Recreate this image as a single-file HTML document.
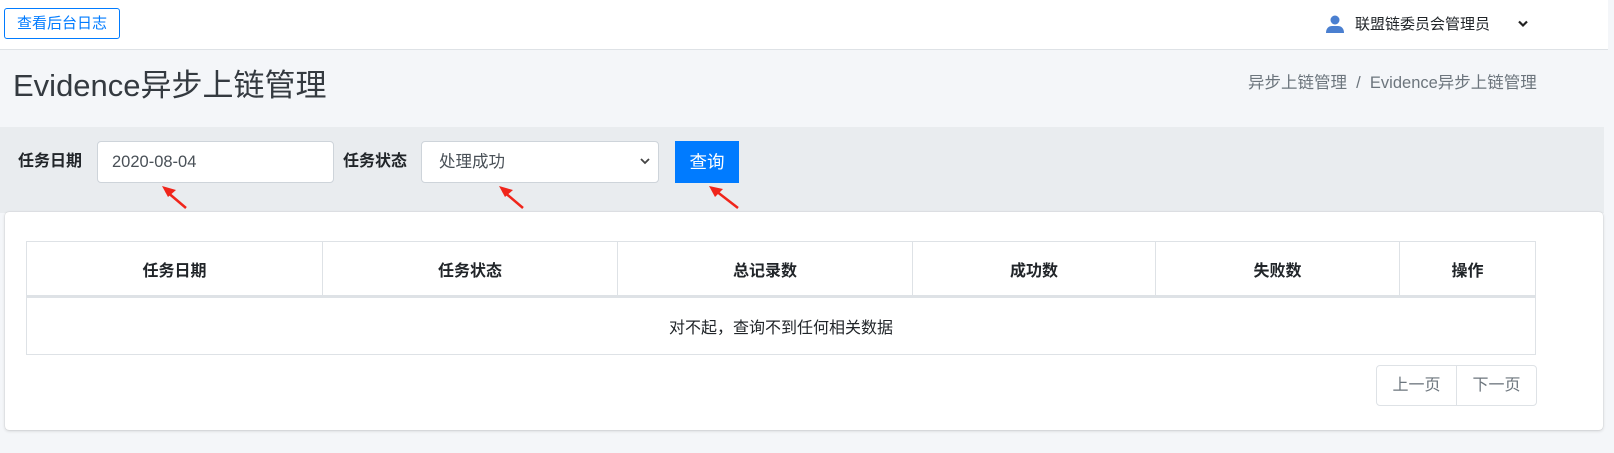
<!DOCTYPE html>
<html><head><meta charset="utf-8"><style>
*{box-sizing:border-box;margin:0;padding:0}
body{width:1614px;height:453px;background:#f4f6f9;font-family:"Liberation Sans","Noto Sans CJK SC",sans-serif;color:#212529;position:relative;overflow:hidden;font-size:16px}
.abs{position:absolute}
.nav{left:0;top:0;width:1608px;height:50px;background:#fff;border-bottom:1px solid #dee2e6}
.btnlog{left:4px;top:8px;width:116px;height:31px;border:1px solid #007bff;border-radius:3px;color:#007bff;font-size:15px;line-height:29px;text-align:center}
.user{left:1326px;top:14px;font-size:15px;color:#212529;line-height:22px}
.filter{left:0;top:127px;width:1604px;height:86px;background:#e9ecef}
.lbl{font-weight:bold;font-size:16px;line-height:22px}
.inp{background:#fff;border:1px solid #ced4da;border-radius:4px;height:42px;font-size:16.5px;color:#495057;line-height:40px;padding-left:14px}
.card{left:5px;top:212px;width:1598px;height:218px;background:#fff;border-radius:4px;box-shadow:0 0 1px rgba(0,0,0,.2),0 1px 3px rgba(0,0,0,.15)}
table{position:absolute;left:26px;top:241px;width:1510px;border-collapse:collapse}
th,td{border:1px solid #dee2e6;text-align:center}
th{height:55px;font-weight:bold;font-size:16px;border-bottom:3px solid #dee2e6}
td{height:58px;font-size:16px}
.pg{left:1376px;top:365px;width:161px;height:41px;border:1px solid #dee2e6;border-radius:4px;display:flex;color:#6c757d;font-size:16px;line-height:39px}
.pg span{flex:1;text-align:center}
</style></head><body>
<div class="abs nav"></div>
<div class="abs btnlog">查看后台日志</div>
<svg class="abs" style="left:1326px;top:15px" width="18" height="18" viewBox="0 0 18 18"><circle cx="9" cy="5" r="4.5" fill="#4a7fd0"/><path d="M0 18c0-5 3-7 6-7h6c3 0 6 2 6 7z" fill="#4a7fd0"/></svg>
<div class="abs user" style="left:1355px">联盟链委员会管理员</div>
<svg class="abs" style="left:1517px;top:20px" width="12" height="8" viewBox="0 0 12 8"><path d="M2 1.5l4 4 4-4" stroke="#222" stroke-width="2.2" fill="none"/></svg>
<div class="abs" style="left:13px;top:64px;font-size:31px;color:#343a40;line-height:44px">Evidence异步上链管理</div>
<div class="abs" style="left:1248px;top:71px;font-size:16.5px;color:#6c757d;line-height:24px">异步上链管理 &nbsp;/&nbsp; Evidence异步上链管理</div>
<div class="abs filter"></div>
<div class="abs lbl" style="left:18px;top:151px">任务日期</div>
<div class="abs inp" style="left:97px;top:141px;width:237px">2020-08-04</div>
<div class="abs lbl" style="left:343px;top:151px">任务状态</div>
<div class="abs inp" style="left:421px;top:141px;width:238px;padding-left:17px">处理成功</div>
<svg class="abs" style="left:640px;top:158px" width="10" height="7" viewBox="0 0 10 7"><path d="M1 1l4 4 4-4" stroke="#444" stroke-width="1.8" fill="none"/></svg>
<div class="abs" style="left:675px;top:141px;width:64px;height:42px;background:#007bff;color:#fff;font-size:17.5px;line-height:42px;text-align:center">查询</div>
<svg class="abs" style="left:0;top:180px" width="800" height="35" viewBox="0 180 800 35">
<g stroke="#f0251b" stroke-width="2.5" fill="#f0251b">
<line x1="186" y1="208" x2="166" y2="191"/><polygon points="162,186 176,190 168,197" stroke="none"/>
<line x1="523" y1="208" x2="503" y2="191"/><polygon points="499,186 513,190 505,197" stroke="none"/>
<line x1="738" y1="208" x2="716" y2="191"/><polygon points="709,186 723,189 715,197" stroke="none"/>
</g></svg>
<div class="abs card"></div>
<table>
<tr><th style="width:296px">任务日期</th><th style="width:295px">任务状态</th><th style="width:295px">总记录数</th><th style="width:243px">成功数</th><th style="width:244px">失败数</th><th>操作</th></tr>
<tr><td colspan="6">对不起，查询不到任何相关数据</td></tr>
</table>
<div class="abs pg"><span style="border-right:1px solid #dee2e6">上一页</span><span>下一页</span></div>
</body></html>
